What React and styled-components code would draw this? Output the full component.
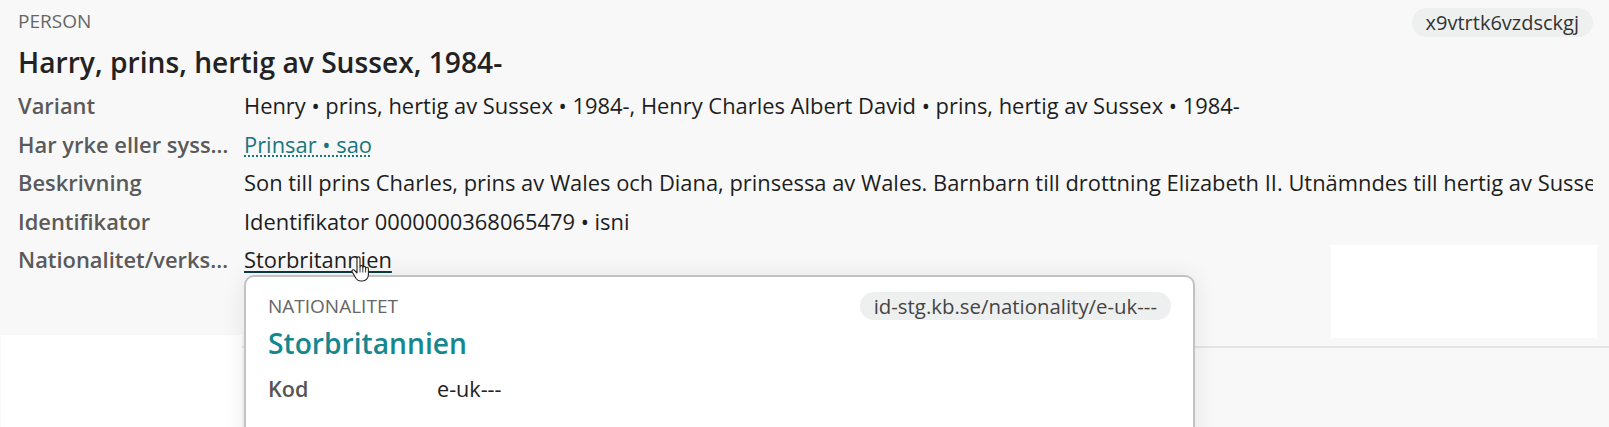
import React from "react";
import styled, { createGlobalStyle } from "styled-components";

const Global = createGlobalStyle`
  html, body {
    margin: 0;
    padding: 0;
    background: #f8f8f8;
    font-family: "Open Sans", "Noto Sans", sans-serif;
    overflow: hidden;
  }
`;

const Page = styled.div`
  position: relative;
  width: 1609px;
  height: 427px;
  overflow: hidden;
  background: #f8f8f8;
`;

const Panel = styled.section`
  height: 335px;
  box-sizing: border-box;
  padding: 7px 16px 0 18px;
  background: #f8f8f8;
`;

const HeaderRow = styled.div`
  display: flex;
  justify-content: space-between;
  align-items: center;
  height: ${(p) => p.$h || 30}px;
`;

const TypeLabel = styled.div`
  font-size: 19px;
  line-height: 24px;
  color: #666;
  text-transform: uppercase;
  margin-top: ${(p) => p.$mt || 0}px;
`;

const IdPill = styled.span`
  display: inline-flex;
  align-items: center;
  height: ${(p) => p.$h || 29}px;
  padding: 0 14px;
  border-radius: 16px;
  background: #eef0f0;
  color: ${(p) => p.$color || "#333"};
  font-size: ${(p) => p.$size || 20}px;
`;

const Title = styled.h1`
  margin: 7px 0 7px;
  font-size: 28.2px;
  line-height: 36px;
  font-weight: 600;
  color: #222;
`;

const Row = styled.div`
  display: flex;
  align-items: flex-start;
  height: 38.5px;
  font-size: 21.9px;
  line-height: 38.5px;
`;

const Label = styled.div`
  flex: 0 0 212px;
  margin-right: 14px;
  color: #5a5a5a;
  font-weight: 600;
  white-space: nowrap;
  overflow: hidden;
  text-overflow: ellipsis;
`;

const Value = styled.div`
  flex: 1;
  min-width: 0;
  color: #1d1d1d;
  white-space: nowrap;
  overflow: hidden;
`;

const DottedLink = styled.a`
  color: #17767c;
  text-decoration: underline dotted #17767c;
  text-decoration-thickness: 2px;
  text-underline-offset: 3px;
`;

const SolidLink = styled.a`
  color: #1d1d1d;
  text-decoration: underline solid #0d3b3f;
  text-decoration-thickness: 2px;
  text-underline-offset: 3px;
`;

const BlankBox = styled.div`
  flex: 0 0 266px;
  height: 93px;
  margin-top: 4px;
  margin-right: -4px;
  background: #fff;
`;

const Lower = styled.div`
  display: flex;
  height: 92px;
`;

const WhiteCard = styled.div`
  flex: 0 0 241px;
  margin-left: 1px;
  background: #fff;
`;

const LowerRest = styled.div`
  flex: 1;
  margin-top: 11px;
  border-top: 2px solid #e4e4e4;
  background: #f8f8f8;
`;

const Popover = styled.div`
  position: absolute;
  left: 244px;
  top: 275px;
  width: 951px;
  height: 200px;
  box-sizing: border-box;
  padding: 14px 22px 0 22px;
  background: #fff;
  border: 2px solid #c2c2c2;
  border-radius: 10px;
  box-shadow: 0 2px 24px rgba(0, 0, 0, 0.09);
`;

const PopTitle = styled.div`
  margin-top: 5px;
  font-size: 28.2px;
  line-height: 36px;
  font-weight: 600;
  color: #16878e;
`;

const PopRow = styled.div`
  display: flex;
  margin-top: 13px;
  font-size: 21.6px;
  line-height: 30px;
`;

const PopLabel = styled.div`
  flex: 0 0 169px;
  color: #555;
  font-weight: 600;
`;

const PopValue = styled.div`
  color: #222;
`;

const Cursor = styled.svg`
  position: absolute;
  left: 350px;
  top: 256px;
  width: 22px;
  height: 26px;
`;

export default function App() {
  return (
    <Page>
      <Global />
      <Panel>
        <HeaderRow>
          <TypeLabel $mt={-2}>Person</TypeLabel>
          <IdPill>x9vtrtk6vzdsckgj</IdPill>
        </HeaderRow>
        <Title>Harry, prins, hertig av Sussex, 1984-</Title>
        <Row>
          <Label>Variant</Label>
          <Value>
            Henry • prins, hertig av Sussex • 1984-, Henry Charles Albert David • prins, hertig av Sussex • 1984-
          </Value>
        </Row>
        <Row>
          <Label>Har yrke eller sysselsättning</Label>
          <Value>
            <DottedLink>Prinsar • sao</DottedLink>
          </Value>
        </Row>
        <Row>
          <Label>Beskrivning</Label>
          <Value>
            Son till prins Charles, prins av Wales och Diana, prinsessa av Wales. Barnbarn till drottning Elizabeth II. Utnämndes till hertig av Sussex 2018.
          </Value>
        </Row>
        <Row>
          <Label>Identifikator</Label>
          <Value>Identifikator 0000000368065479 • isni</Value>
        </Row>
        <Row>
          <Label>Nationalitet/verksamhetsland</Label>
          <Value>
            <SolidLink>Storbritannien</SolidLink>
          </Value>
          <BlankBox />
        </Row>
      </Panel>
      <Lower>
        <WhiteCard />
        <LowerRest />
      </Lower>
      <Popover>
        <HeaderRow $h={29}>
          <TypeLabel>Nationalitet</TypeLabel>
          <IdPill $h={28} $size={20.4} $color="#444">
            id-stg.kb.se/nationality/e-uk---
          </IdPill>
        </HeaderRow>
        <PopTitle>Storbritannien</PopTitle>
        <PopRow>
          <PopLabel>Kod</PopLabel>
          <PopValue>e-uk---</PopValue>
        </PopRow>
      </Popover>
      <Cursor viewBox="0 0 22 26">
        <path
          d="M7 2.5c0-1 .7-1.6 1.5-1.6S10 1.5 10 2.5V11c0-.9.7-1.4 1.4-1.4s1.4.5 1.4 1.4v.8c0-.9.7-1.4 1.4-1.4s1.4.5 1.4 1.4v.9c0-.9.7-1.4 1.4-1.4s1.4.6 1.4 1.5v6c0 3.5-2.5 6.2-6 6.2h-1.5c-2.3 0-3.8-1-5-2.8L2.2 16c-.5-.8-.3-1.6.3-2s1.4-.3 2 .4L7 17V2.5z"
          fill="#fff"
          stroke="#222"
          strokeWidth="1.1"
          strokeLinejoin="round"
        />
        <path d="M10 11v5.5M12.8 12v4.5M15.6 12.8v3.7" stroke="#222" strokeWidth="0.9" />
      </Cursor>
    </Page>
  );
}
